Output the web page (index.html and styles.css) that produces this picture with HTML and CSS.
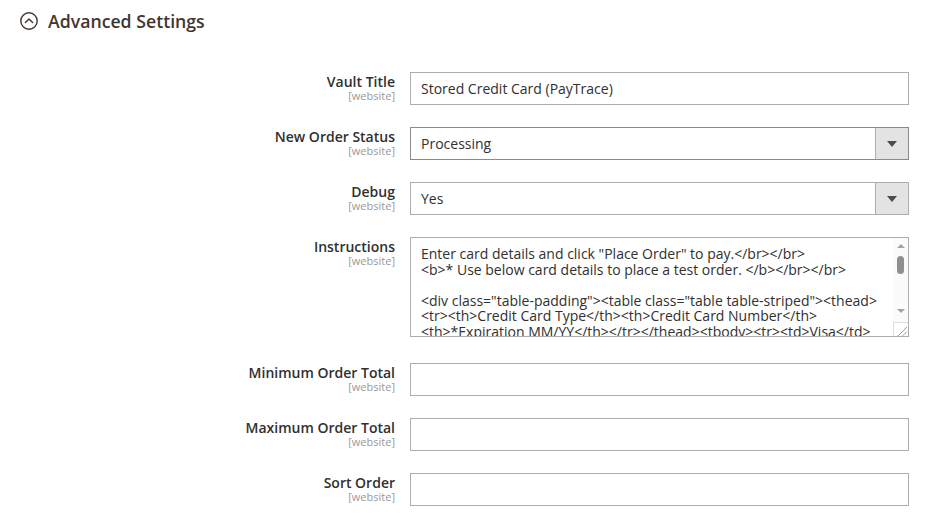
FILE: index.html
```html
<!DOCTYPE html>
<html>
<head>
<meta charset="utf-8">
<link rel="stylesheet" href="styles.css">
</head>
<body>
<div class="section">
  <div class="section-head">
    <svg class="toggle" width="18" height="18" viewBox="0 0 18 18">
      <circle cx="9" cy="9" r="8.2" fill="none" stroke="#41362f" stroke-width="1.4"/>
      <path d="M5.4 10.6 L9 7 L12.6 10.6" fill="none" stroke="#41362f" stroke-width="1.4" stroke-linecap="round" stroke-linejoin="round"/>
    </svg>
    <span class="title">Advanced Settings</span>
  </div>
  <div class="form">
    <div class="row">
      <div class="label"><span class="name">Vault Title</span><span class="scope">[website]</span></div>
      <div class="control"><input class="input" type="text" value="Stored Credit Card (PayTrace)"></div>
    </div>
    <div class="row">
      <div class="label"><span class="name">New Order Status</span><span class="scope">[website]</span></div>
      <div class="control"><div class="select select-dark"><span class="select-value">Processing</span><span class="select-btn"><span class="tri"></span></span></div></div>
    </div>
    <div class="row">
      <div class="label"><span class="name">Debug</span><span class="scope">[website]</span></div>
      <div class="control"><div class="select"><span class="select-value">Yes</span><span class="select-btn"><span class="tri"></span></span></div></div>
    </div>
    <div class="row row-tall">
      <div class="label"><span class="name">Instructions</span><span class="scope">[website]</span></div>
      <div class="control">
        <div class="ta-wrap">
<textarea class="textarea" wrap="off">Enter card details and click "Place Order" to pay.&lt;/br&gt;&lt;/br&gt;
&lt;b&gt;* Use below card details to place a test order. &lt;/b&gt;&lt;/br&gt;&lt;/br&gt;

&lt;div class="table-padding"&gt;&lt;table class="table table-striped"&gt;&lt;thead&gt;
&lt;tr&gt;&lt;th&gt;Credit Card Type&lt;/th&gt;&lt;th&gt;Credit Card Number&lt;/th&gt;
&lt;th&gt;*Expiration MM/YY&lt;/th&gt;&lt;/tr&gt;&lt;/thead&gt;&lt;tbody&gt;&lt;tr&gt;&lt;td&gt;Visa&lt;/td&gt;
&lt;td&gt;4111111111111111&lt;/td&gt;&lt;td&gt;12/25&lt;/td&gt;&lt;/tr&gt;
&lt;tr&gt;&lt;td&gt;MasterCard&lt;/td&gt;&lt;td&gt;5454545454545454&lt;/td&gt;
&lt;td&gt;12/25&lt;/td&gt;&lt;/tr&gt;&lt;tr&gt;&lt;td&gt;American Express&lt;/td&gt;
&lt;td&gt;371449635398431&lt;/td&gt;&lt;td&gt;12/25&lt;/td&gt;&lt;/tr&gt;
&lt;tr&gt;&lt;td&gt;Discover&lt;/td&gt;&lt;td&gt;6011000993026909&lt;/td&gt;
&lt;td&gt;12/25&lt;/td&gt;&lt;/tr&gt;&lt;/tbody&gt;&lt;/table&gt;&lt;/div&gt;
&lt;b&gt;* Use any 3 digit CVV for Visa, MasterCard and Discover.&lt;/b&gt;
&lt;b&gt;* Use any 4 digit CVV for American Express.&lt;/b&gt;</textarea>
          <div class="sb">
            <span class="sb-up"></span>
            <span class="sb-thumb"></span>
            <span class="sb-space"></span>
            <span class="sb-down"></span>
            <span class="sb-corner">
              <svg width="14" height="13" viewBox="0 0 14 13"><path d="M13 4 L4 13 M13 8.5 L8.5 13" stroke="#9a9a9a" stroke-width="1" fill="none"/></svg>
            </span>
          </div>
        </div>
      </div>
    </div>
    <div class="row">
      <div class="label"><span class="name">Minimum Order Total</span><span class="scope">[website]</span></div>
      <div class="control"><input class="input" type="text" value=""></div>
    </div>
    <div class="row">
      <div class="label"><span class="name">Maximum Order Total</span><span class="scope">[website]</span></div>
      <div class="control"><input class="input" type="text" value=""></div>
    </div>
    <div class="row">
      <div class="label"><span class="name">Sort Order</span><span class="scope">[website]</span></div>
      <div class="control"><input class="input" type="text" value=""></div>
    </div>
  </div>
</div>
</body>
</html>
```
FILE: styles.css
```css
html, body {
  margin: 0;
  padding: 0;
  background: #ffffff;
}
body {
  font-family: "Open Sans", "Liberation Sans", sans-serif;
  color: #303030;
}
.section-head {
  display: flex;
  align-items: center;
  height: 41px;
  padding-left: 20px;
  gap: 10px;
}
.toggle {
  display: block;
  flex: none;
}
.title {
  font-size: 17.7px;
  font-weight: 600;
  color: #41362f;
}
.form {
  display: flex;
  flex-direction: column;
  gap: 22px;
  padding-top: 31px;
}
.row {
  display: flex;
  gap: 15px;
}
.row-tall {
  margin-bottom: 4px;
}
.label {
  width: 395px;
  display: flex;
  flex-direction: column;
  align-items: flex-end;
  text-align: right;
}
.name {
  font-size: 14px;
  font-weight: 600;
  line-height: 19px;
  color: #303030;
}
.scope {
  font-size: 11px;
  line-height: 10px;
  color: #999999;
}
.control {
  width: 499px;
}
.input {
  display: block;
  box-sizing: border-box;
  width: 100%;
  height: 33px;
  margin: 0;
  border: 1px solid #adadad;
  border-radius: 0;
  padding: 0 10px;
  font-family: "Open Sans", "Liberation Sans", sans-serif;
  font-size: 14px;
  color: #303030;
  background: #ffffff;
  outline: none;
}
.select {
  box-sizing: border-box;
  height: 33px;
  border: 1px solid #adadad;
  display: flex;
  align-items: stretch;
  background: #ffffff;
}
.select-dark {
  border-color: #8a8a8a;
}
.select-value {
  flex: 1;
  display: flex;
  align-items: center;
  padding-left: 10px;
  font-size: 14px;
  color: #303030;
}
.select-btn {
  width: 32px;
  flex: none;
  background: #e3e3e3;
  border-left: 1px solid #adadad;
  display: flex;
  align-items: center;
  justify-content: center;
}
.tri {
  width: 0;
  height: 0;
  border-left: 5px solid transparent;
  border-right: 5px solid transparent;
  border-top: 6px solid #514943;
}
.ta-wrap {
  position: relative;
}
.textarea {
  display: block;
  box-sizing: border-box;
  width: 100%;
  height: 100px;
  margin: 0;
  border: 1px solid #adadad;
  border-radius: 0;
  padding: 8px 26px 8px 10px;
  font-family: "Open Sans", "Liberation Sans", sans-serif;
  font-size: 14px;
  line-height: 15.6px;
  color: #303030;
  background: #ffffff;
  overflow: hidden;
  white-space: pre;
  resize: none;
  outline: none;
}
.sb {
  position: absolute;
  top: 1px;
  right: 1px;
  bottom: 1px;
  width: 15px;
  background: #fbfbfb;
  display: flex;
  flex-direction: column;
  align-items: center;
}
.sb-up {
  margin-top: 6px;
  width: 0;
  height: 0;
  border-left: 4px solid transparent;
  border-right: 4px solid transparent;
  border-bottom: 4px solid #a3a3a3;
}
.sb-thumb {
  margin-top: 8px;
  width: 7px;
  height: 18px;
  border-radius: 4px;
  background: #8f8f8f;
}
.sb-space {
  flex: 1;
}
.sb-down {
  margin-bottom: 9px;
  width: 0;
  height: 0;
  border-left: 4px solid transparent;
  border-right: 4px solid transparent;
  border-top: 4px solid #a3a3a3;
}
.sb-corner {
  box-sizing: border-box;
  align-self: stretch;
  height: 14px;
  border-top: 1px solid #dedede;
  border-left: 1px solid #dedede;
  background: #ffffff;
  display: flex;
  align-items: flex-end;
  justify-content: flex-end;
}
.sb-corner svg {
  display: block;
}
```
